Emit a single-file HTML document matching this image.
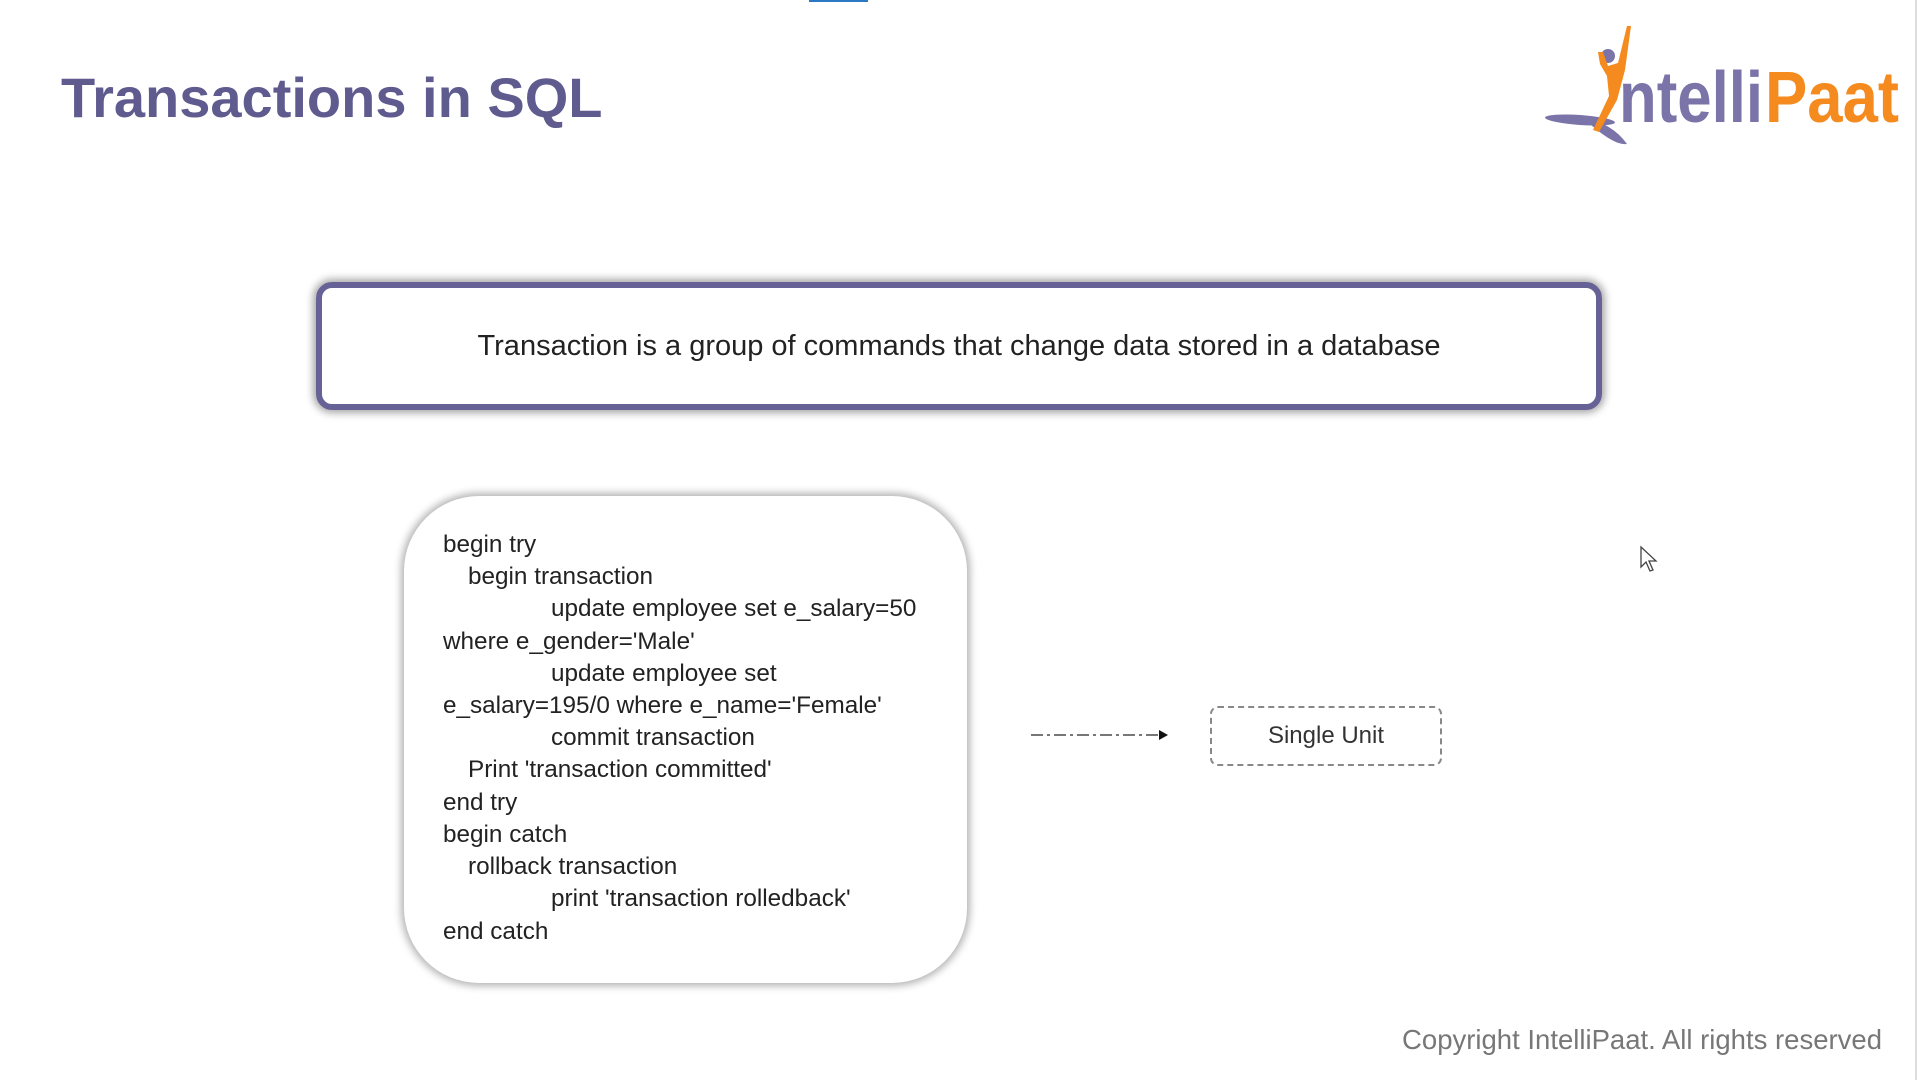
<!DOCTYPE html>
<html><head><meta charset="utf-8"><style>
body{margin:0;width:1920px;height:1080px;background:#fff;position:relative;overflow:hidden;font-family:"Liberation Sans",sans-serif}
.abs{position:absolute}
#title{left:61px;top:65px;font-size:56px;font-weight:bold;color:#5f5b8f;white-space:nowrap;line-height:66px}
#top{left:316px;top:282px;width:1274px;height:116px;border:6px solid #676296;border-radius:16px;box-shadow:0 0 8px 3px rgba(0,0,0,.35);text-align:center;line-height:116px;font-size:29px;color:#222}
#code{left:404px;top:496px;width:563px;height:487px;border-radius:75px;box-shadow:0 0 8px 3px rgba(0,0,0,.3);background:#fff}
.l{position:absolute;font-size:24.3px;color:#222;white-space:nowrap;line-height:32px}
#unit{left:1210px;top:706px;width:228px;height:56px;border:2px dashed #888;border-radius:8px;text-align:center;line-height:56px;font-size:24px;color:#333}
#copy{right:38px;top:1024px;font-size:27.5px;color:#777;white-space:nowrap}
</style></head><body>
<div class="abs" style="left:809px;top:0;width:59px;height:2px;background:#2b79c2"></div>
<div class="abs" style="left:1915px;top:0;width:2px;height:1080px;background:#ddd"></div>
<div class="abs" id="title">Transactions in SQL</div>
<svg class="abs" style="left:1545px;top:20px" width="360" height="130" viewBox="0 0 360 130">
<ellipse cx="35" cy="100" rx="35" ry="5" fill="#7a74a8" transform="rotate(4 35 100)"/>
<path d="M30 97 Q65 100 82 124 Q70 126 45 104 Z" fill="#7a74a8"/>
<circle cx="63" cy="36" r="7" fill="#7a74a8"/>
<path d="M82 6 L86 6 L80 50 L72 80 L54 112 L48 110 L64 76 L62 56 L55 44 L53 32 L58 32 L63 46 L73 43 Z" fill="#f58a1f"/>
<text x="74" y="102" font-family="Liberation Sans" font-weight="bold" font-size="72" fill="#7a74a8" textLength="144" lengthAdjust="spacingAndGlyphs">ntelli</text>
<text x="220" y="102" font-family="Liberation Sans" font-weight="bold" font-size="72" fill="#f58a1f" textLength="134" lengthAdjust="spacingAndGlyphs">Paat</text>
</svg>
<div class="abs" id="top">Transaction is a group of commands that change data stored in a database</div>
<div class="abs" id="code"></div>
<div class="l" style="left:443px;top:529px">begin try</div>
<div class="l" style="left:468px;top:561px">begin transaction</div>
<div class="l" style="left:551px;top:593px">update employee set e_salary=50</div>
<div class="l" style="left:443px;top:626px">where e_gender='Male'</div>
<div class="l" style="left:551px;top:658px">update employee set</div>
<div class="l" style="left:443px;top:690px">e_salary=195/0 where e_name='Female'</div>
<div class="l" style="left:551px;top:722px">commit transaction</div>
<div class="l" style="left:468px;top:754px">Print 'transaction committed'</div>
<div class="l" style="left:443px;top:787px">end try</div>
<div class="l" style="left:443px;top:819px">begin catch</div>
<div class="l" style="left:468px;top:851px">rollback transaction</div>
<div class="l" style="left:551px;top:883px">print 'transaction rolledback'</div>
<div class="l" style="left:443px;top:916px">end catch</div>
<svg class="abs" style="left:1028px;top:726px" width="145" height="20"><line x1="3" y1="9" x2="132" y2="9" stroke="#777" stroke-width="2" stroke-dasharray="12 4 3 4"/><path d="M131 4 L140 9 L131 14 Z" fill="#111"/></svg>
<div class="abs" id="unit">Single Unit</div>
<svg class="abs" style="left:1638px;top:545px" width="22" height="30"><path d="M3 2 L3 22 L8 17 L12 26 L15 25 L11 16 L18 16 Z" fill="#fff" stroke="#444" stroke-width="1.3"/></svg>
<div class="abs" id="copy">Copyright IntelliPaat. All rights reserved</div>
</body></html>
